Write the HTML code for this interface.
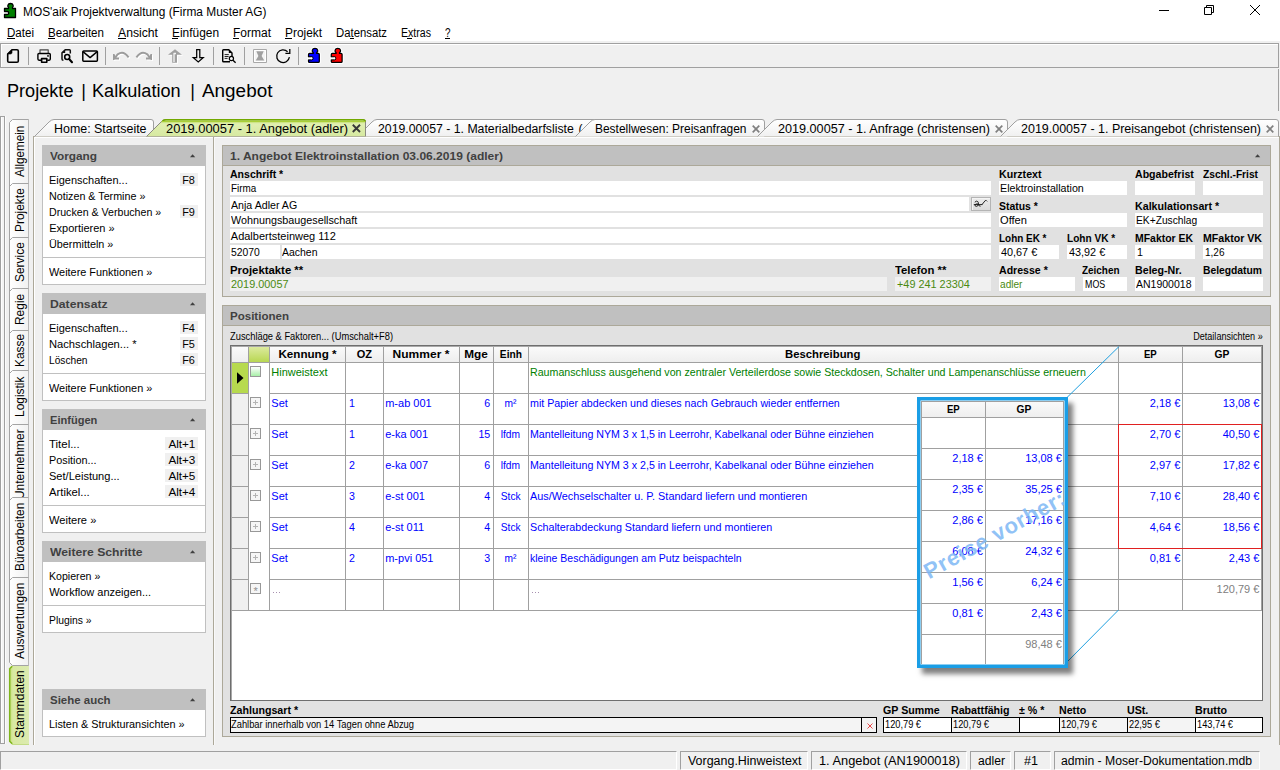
<!DOCTYPE html>
<html><head><meta charset="utf-8"><title>MOS'aik Projektverwaltung</title>
<style>
html,body{margin:0;padding:0}
body{width:1280px;height:770px;overflow:hidden;background:#f0f0f0;position:relative;font-family:"Liberation Sans",sans-serif;}
div{position:absolute;box-sizing:border-box}
svg{position:absolute;overflow:visible}
.t{position:absolute;white-space:pre;font-family:"Liberation Sans",sans-serif;color:#000}
</style></head><body>
<div style="left:0px;top:0px;width:1280px;height:41px;background:#fff;"></div>
<svg style="left:3px;top:2px" width="15" height="17" viewBox="0 0 15 17">
<path d="M1.5 6.5H5.5V5.2C4.4 4.6 4.4 1.5 7.5 1.5S10.6 4.6 9.5 5.2V6.5H12.5V15.5H1.5V12.5H4.2C6.2 12.5 6.2 9.5 4.2 9.5H1.5Z" fill="#008000" stroke="#000" stroke-width="1.3" stroke-linejoin="round"/></svg>
<span class="t" style="left:22.80px;top:6px;font-size:12px;line-height:12px;transform-origin:0 0;transform:scaleX(0.9907);">MOS&#x27;aik Projektverwaltung (Firma Muster AG)</span>
<svg style="left:1150px;top:0" width="130" height="22" viewBox="0 0 130 22" fill="none" stroke="#000" stroke-width="1">
<path d="M9 10.5H19"/><path d="M54.5 7.5H61.500V14.500H54.500Z"/><path d="M56.500 7.500V5.500H63.500V12.500H61.500"/>
<path d="M100 5L110 15M110 5L100 15" stroke-width="1"/></svg>
<span class="t" style="left:7.00px;top:27px;font-size:12px;line-height:12px;transform-origin:0 0;transform:scaleX(0.9637);">Datei</span>
<div style="left:7px;top:38px;width:8px;height:1px;background:#000;"></div>
<span class="t" style="left:48.00px;top:27px;font-size:12px;line-height:12px;transform-origin:0 0;transform:scaleX(0.9647);">Bearbeiten</span>
<div style="left:48px;top:38px;width:7px;height:1px;background:#000;"></div>
<span class="t" style="left:118.00px;top:27px;font-size:12px;line-height:12px;transform-origin:0 0;transform:scaleX(1.0163);">Ansicht</span>
<div style="left:118px;top:38px;width:8px;height:1px;background:#000;"></div>
<span class="t" style="left:172.00px;top:27px;font-size:12px;line-height:12px;transform-origin:0 0;transform:scaleX(0.9921);">Einfügen</span>
<div style="left:172px;top:38px;width:6px;height:1px;background:#000;"></div>
<span class="t" style="left:233.00px;top:27px;font-size:12px;line-height:12px;">Format</span>
<div style="left:233px;top:38px;width:6px;height:1px;background:#000;"></div>
<span class="t" style="left:285.00px;top:27px;font-size:12px;line-height:12px;transform-origin:0 0;transform:scaleX(0.9904);">Projekt</span>
<div style="left:285px;top:38px;width:7px;height:1px;background:#000;"></div>
<span class="t" style="left:336.00px;top:27px;font-size:12px;line-height:12px;transform-origin:0 0;transform:scaleX(0.9439);">Datensatz</span>
<div style="left:350px;top:38px;width:4px;height:1px;background:#000;"></div>
<span class="t" style="left:401.00px;top:27px;font-size:12px;line-height:12px;transform-origin:0 0;transform:scaleX(0.8819);">Extras</span>
<div style="left:407px;top:38px;width:5px;height:1px;background:#000;"></div>
<span class="t" style="left:445.00px;top:27px;font-size:12px;line-height:12px;transform-origin:0 0;transform:scaleX(0.8224);">?</span>
<div style="left:445px;top:38px;width:5px;height:1px;background:#000;"></div>
<div style="left:0px;top:43px;width:1279px;height:25px;border:1px solid #a0a0a0;"></div>
<div style="left:1px;top:44px;width:1277px;height:1px;background:#fff;"></div>
<div style="left:1px;top:44px;width:1px;height:23px;background:#fff;"></div>
<div style="left:28px;top:47px;width:1px;height:18px;background:#a0a0a0;"></div>
<div style="left:105px;top:47px;width:1px;height:18px;background:#a0a0a0;"></div>
<div style="left:159px;top:47px;width:1px;height:18px;background:#a0a0a0;"></div>
<div style="left:213px;top:47px;width:1px;height:18px;background:#a0a0a0;"></div>
<div style="left:244px;top:47px;width:1px;height:18px;background:#a0a0a0;"></div>
<div style="left:298px;top:47px;width:1px;height:18px;background:#a0a0a0;"></div>
<svg style="left:0;top:0" width="360" height="70" viewBox="0 0 360 70" fill="none" stroke-linejoin="round" stroke-linecap="butt">
<!-- new doc -->
<path d="M12 49.7H17Q18.3 49.7 18.3 51V61Q18.3 62.3 17 62.3H9Q7.7 62.3 7.7 61V54Z" stroke="#000" stroke-width="1.6"/>
<path d="M7.7 54L12 49.7V52.6Q12 54 10.6 54Z" fill="#000" stroke="#000" stroke-width="0.6"/>
<!-- printer -->
<path d="M40 53.2V49.800H48.200V53.200" stroke="#444" stroke-width="1.150"/>
<path d="M41 60.2H39Q37.9 60.2 37.9 59.1V54.6Q37.9 53.5 39 53.5H49.2Q50.3 53.5 50.3 54.6V59.1Q50.3 60.2 49.2 60.2H47.2" stroke="#000" stroke-width="1.4"/>
<path d="M41.6 58.6H46.8V62.2H41.6Z" stroke="#000" stroke-width="1.6"/>
<circle cx="48" cy="55.9" r="0.9" fill="#000"/>
<!-- preview (doc + magnifier) -->
<path d="M70.3 53.6V50.6Q70.3 49.7 69.4 49.7H65.2L62 52.9V59Q62 60.2 63.4 60.3" stroke="#111" stroke-width="1.5"/>
<path d="M62 52.9L65.2 49.7V52.9Z" fill="#111"/>
<circle cx="67.2" cy="57" r="2.5" stroke="#000" stroke-width="1.6"/>
<path d="M69.1 59L72 62.2" stroke="#000" stroke-width="2.1" stroke-linecap="round"/>
<!-- envelope -->
<path d="M83.7 50.9H96.5Q97.4 50.9 97.4 51.8V60.3Q97.4 61.2 96.5 61.2H83.7Q82.8 61.2 82.8 60.3V51.8Q82.8 50.9 83.7 50.9Z" stroke="#000" stroke-width="1.5"/>
<path d="M83 51.6L90.1 57.6L97.2 51.6" stroke="#000" stroke-width="1.4"/>
<!-- undo -->
<g transform="translate(1,1)"><path d="M115.600 57.200L117.600 54.300Q120 52.800 122 52.800Q125 52.800 128.600 57.300" stroke="#fff" stroke-width="2"/>
<path d="M113 54H114.400L116.400 57.600H119V59.400H114.400V60H113Z" fill="#fff"/></g>
<path d="M115.600 57.200L117.600 54.300Q120 52.800 122 52.800Q125 52.800 128.600 57.300" stroke="#9c9c9c" stroke-width="2"/>
<path d="M113 54H114.400L116.400 57.600H119V59.400H114.400V60H113Z" fill="#9c9c9c"/>
<!-- redo -->
<g transform="translate(1,1)"><path d="M149.400 57.200L147.400 54.300Q145 52.800 143 52.800Q140 52.800 136.400 57.300" stroke="#fff" stroke-width="2"/>
<path d="M152 54H150.600L148.600 57.600H146V59.400H150.600V60H152Z" fill="#fff"/></g>
<path d="M149.400 57.200L147.400 54.300Q145 52.800 143 52.800Q140 52.800 136.400 57.300" stroke="#9c9c9c" stroke-width="2"/>
<path d="M152 54H150.600L148.600 57.600H146V59.400H150.600V60H152Z" fill="#9c9c9c"/>
<!-- up arrow (disabled) -->
<path d="M175 49.2L182 54.8H177V62.7H172.200V54.8H168Z" fill="#fff" transform="translate(1,1)"/>
<path d="M175 49.200L182 54.800H177V62.700H172.200V54.800H168Z" fill="#a0a0a0"/>
<path d="M174 62V53.500H176" stroke="#f4f4f4" stroke-width="1.300"/>
<!-- down arrow -->
<path d="M196.700 49.700H199.800V57.700H203.200L198.250 62L193.300 57.700H196.700Z" stroke="#000" stroke-width="1.250" stroke-linejoin="miter"/>
<!-- doc search -->
<path d="M232 57V53L228.800 49.700H223.500Q222.700 49.700 222.700 50.500V61Q222.700 61.800 223.500 61.800H230" stroke="#000" stroke-width="1.400"/>
<path d="M228.800 49.700V53H232Z" fill="#000"/>
<path d="M224.600 54.600H228.800M224.600 56.500H228.600M224.600 58.400H227.600" stroke="#222" stroke-width="1"/>
<circle cx="231.400" cy="58.500" r="2.100" stroke="#000" stroke-width="1.200" fill="#f6f6f6"/>
<path d="M233 60.200L235.600 62.700" stroke="#000" stroke-width="1.300"/>
<!-- disabled X -->
<rect x="253.500" y="49.500" width="13" height="13" stroke="#a8a8a8" stroke-width="1" fill="#f4f4f4"/>
<rect x="254.500" y="50.500" width="11" height="11" stroke="#fff" stroke-width="1"/>
<path d="M256.300 51.300H263.700L261.600 56L264.300 60.600H255.700L258.400 56Z" fill="#a0a0a0"/>
<!-- refresh -->
<path d="M289.400 57.200A6.400 6.400 0 1 1 287.600 51.700" stroke="#000" stroke-width="1.300"/>
<path d="M289.800 49V53.400H285.400" stroke="#000" stroke-width="1.300" stroke-linejoin="miter"/>
<!-- puzzles -->
<path transform="translate(0,0)" d="M308.5 56.9V54.4Q308.5 53.4 309.5 53.4H313.300V52.600C311.500 51.600 311.900 48.400 315 48.400S318.500 51.600 316.700 52.600V53.400H318.300Q319.300 53.400 319.300 54.400V61.400Q319.300 62.400 318.300 62.400H309.500Q308.500 62.400 308.500 61.400V59.800H311.500A1.450 1.450 0 0 0 311.500 56.900Z" stroke="#fff" stroke-width="3.2" fill="#fff"/>
<path transform="translate(0,0)" d="M308.5 56.9V54.4Q308.5 53.4 309.5 53.4H313.300V52.600C311.500 51.600 311.900 48.400 315 48.400S318.500 51.600 316.700 52.600V53.400H318.300Q319.300 53.400 319.300 54.400V61.400Q319.300 62.400 318.300 62.400H309.500Q308.500 62.400 308.500 61.400V59.800H311.500A1.450 1.450 0 0 0 311.500 56.900Z" stroke="#000" stroke-width="1.250" fill="#0000ff"/>
<circle cx="311.55" cy="58.35" r="1.05" fill="#fff"/><rect x="307.2" y="57.550" width="3.500" height="1.600" fill="#fafafa"/>
<path transform="translate(22.8,0)" d="M308.5 56.9V54.4Q308.5 53.4 309.5 53.4H313.300V52.600C311.500 51.600 311.900 48.400 315 48.400S318.500 51.600 316.700 52.600V53.400H318.300Q319.300 53.400 319.300 54.400V61.400Q319.300 62.400 318.300 62.400H309.500Q308.500 62.400 308.500 61.400V59.800H311.500A1.450 1.450 0 0 0 311.500 56.900Z" stroke="#fff" stroke-width="3.2" fill="#fff"/>
<path transform="translate(22.8,0)" d="M308.5 56.9V54.4Q308.5 53.4 309.5 53.4H313.300V52.600C311.500 51.600 311.900 48.400 315 48.400S318.500 51.600 316.700 52.600V53.400H318.300Q319.300 53.400 319.300 54.400V61.400Q319.300 62.400 318.300 62.400H309.500Q308.500 62.400 308.500 61.400V59.800H311.500A1.450 1.450 0 0 0 311.500 56.900Z" stroke="#000" stroke-width="1.250" fill="#ff0000"/>
<circle cx="334.35" cy="58.35" r="1.05" fill="#fff"/><rect x="330.0" y="57.550" width="3.500" height="1.600" fill="#fafafa"/>
</svg>

<span class="t" style="left:6.60px;top:82px;font-size:18px;line-height:18px;transform-origin:0 0;transform:scaleX(1.0069);">Projekte</span>
<span class="t" style="left:81.30px;top:82px;font-size:18px;line-height:18px;">|</span>
<span class="t" style="left:92.40px;top:82px;font-size:18px;line-height:18px;transform-origin:0 0;transform:scaleX(1.0061);">Kalkulation</span>
<span class="t" style="left:190.30px;top:82px;font-size:18px;line-height:18px;">|</span>
<span class="t" style="left:202.00px;top:82px;font-size:18px;line-height:18px;transform-origin:0 0;transform:scaleX(1.0498);">Angebot</span>
<div style="left:1278px;top:69px;width:1px;height:42px;background:#a0a0a0;"></div>
<div style="left:0px;top:116px;width:1px;height:628px;background:#a0a0a0;"></div>
<div style="left:1px;top:117px;width:1px;height:627px;background:#ffffff;"></div>
<div style="left:2px;top:117px;width:2px;height:627px;background:#f4f4f4;"></div>
<div style="left:4px;top:116px;width:1px;height:628px;background:#a0a0a0;"></div>
<div style="left:5px;top:116px;width:1px;height:628px;background:#fcfcfc;"></div>
<div style="left:0px;top:116px;width:5px;height:1px;background:#a0a0a0;"></div>
<div style="left:0px;top:743px;width:5px;height:1px;background:#a0a0a0;"></div>
<div style="left:33px;top:136px;width:1247px;height:609px;border:1px solid #aca899;border-bottom:none;"></div>
<div style="left:34px;top:137px;width:1245px;height:608px;border:1px solid #fff;border-right:none;border-bottom:none;"></div>
<div style="left:213px;top:137px;width:1px;height:608px;background:#aca899;"></div>
<div style="left:214px;top:137px;width:1px;height:608px;background:#f9f9f9;"></div>
<svg width="0" height="0"><defs>
<linearGradient id="gt" x1="0" y1="0" x2="0" y2="1"><stop offset="0" stop-color="#ffffff"/><stop offset="1" stop-color="#f0f0f0"/></linearGradient>
<linearGradient id="ga" x1="0" y1="0" x2="0" y2="1"><stop offset="0" stop-color="#d4e790"/><stop offset="0.3" stop-color="#e0efb0"/><stop offset="1" stop-color="#d6e8a0"/></linearGradient>
</defs></svg>
<svg style="left:34px;top:119px;z-index:2" width="120" height="18" viewBox="0 0 120 18"><path d="M0.5 17.5L15 3Q17.5 0.5 20 0.5H117Q119.5 0.5 119.5 3V17.5Z" fill="url(#gt)" stroke="none"/><path d="M0.5 17.5L15 3Q17.5 0.5 20 0.5H117Q119.5 0.5 119.5 3V17.5" fill="none" stroke="#a0a0a0" stroke-width="1"/></svg>
<svg style="left:357px;top:119px;z-index:1" width="244" height="18" viewBox="0 0 244 18"><path d="M0.5 17.5L15 3Q17.5 0.5 20 0.5H241Q243.5 0.5 243.5 3V17.5Z" fill="url(#gt)" stroke="none"/><path d="M0.5 17.5L15 3Q17.5 0.5 20 0.5H241Q243.5 0.5 243.5 3V17.5" fill="none" stroke="#a0a0a0" stroke-width="1"/></svg>
<svg style="left:575px;top:119px;z-index:2" width="190" height="18" viewBox="0 0 190 18"><path d="M0.5 17.5L15 3Q17.5 0.5 20 0.5H187Q189.5 0.5 189.5 3V17.5Z" fill="url(#gt)" stroke="none"/><path d="M0.5 17.5L15 3Q17.5 0.5 20 0.5H187Q189.5 0.5 189.5 3V17.5" fill="none" stroke="#a0a0a0" stroke-width="1"/></svg>
<svg style="left:757px;top:119px;z-index:3" width="251" height="18" viewBox="0 0 251 18"><path d="M0.5 17.5L15 3Q17.5 0.5 20 0.5H248Q250.5 0.5 250.5 3V17.5Z" fill="url(#gt)" stroke="none"/><path d="M0.5 17.5L15 3Q17.5 0.5 20 0.5H248Q250.5 0.5 250.5 3V17.5" fill="none" stroke="#a0a0a0" stroke-width="1"/></svg>
<svg style="left:1000px;top:119px;z-index:4" width="279" height="18" viewBox="0 0 279 18"><path d="M0.5 17.5L15 3Q17.5 0.5 20 0.5H276Q278.5 0.5 278.5 3V17.5Z" fill="url(#gt)" stroke="none"/><path d="M0.5 17.5L15 3Q17.5 0.5 20 0.5H276Q278.5 0.5 278.5 3V17.5" fill="none" stroke="#a0a0a0" stroke-width="1"/></svg>
<svg style="left:146px;top:119px;z-index:5" width="220" height="18" viewBox="0 0 220 18"><path d="M0.5 17.5L15 3Q17.5 0.5 20 0.5H217Q219.5 0.5 219.5 3V17.5Z" fill="url(#ga)" stroke="none"/><path d="M0.5 17.5L15 3Q17.5 0.5 20 0.5H217Q219.5 0.5 219.5 3V17.5" fill="none" stroke="#8a8a80" stroke-width="1"/><path d="M16.500 1.800Q18 0.700 20 0.700H217Q219.2 0.700 219.3 2.600" fill="none" stroke="#72a800" stroke-width="1.500"/><path d="M15.500 2.600H219" fill="none" stroke="#a9cf38" stroke-width="1.400"/><path d="M1 17.500H220" fill="none" stroke="#b2b29c" stroke-width="1"/></svg>
<span class="t" style="left:54.00px;top:123px;font-size:12px;line-height:12px;transform-origin:0 0;transform:scaleX(1.0350);z-index:6;">Home: Startseite</span>
<span class="t" style="left:166.00px;top:123px;font-size:12px;line-height:12px;transform-origin:0 0;transform:scaleX(1.0739);z-index:6;">2019.00057 - 1. Angebot (adler)</span>
<svg style="left:352.2px;top:124.2px;z-index:6" width="8.8" height="8.8" viewBox="0 0 8 8"><path d="M0.7 0.7L7.3 7.3M7.3 0.7L0.7 7.3" stroke="#383838" stroke-width="1.7" fill="none"/></svg>
<span class="t" style="left:378.00px;top:123px;font-size:12px;line-height:12px;transform-origin:0 0;transform:scaleX(1.0227);z-index:1;">2019.00057 - 1. Materialbedarfsliste</span>
<span class="t" style="left:578.60px;top:123px;font-size:12px;line-height:12px;z-index:1;">(</span>
<span class="t" style="left:595.00px;top:123px;font-size:12px;line-height:12px;transform-origin:0 0;transform:scaleX(0.9961);z-index:6;">Bestellwesen: Preisanfragen</span>
<svg style="left:751.5px;top:124.5px;z-index:6" width="8" height="8" viewBox="0 0 8 8"><path d="M0.7 0.7L7.3 7.3M7.3 0.7L0.7 7.3" stroke="#808080" stroke-width="1.7" fill="none"/></svg>
<span class="t" style="left:777.50px;top:123px;font-size:12px;line-height:12px;transform-origin:0 0;transform:scaleX(1.0523);z-index:6;">2019.00057 - 1. Anfrage (christensen)</span>
<svg style="left:994.5px;top:124.5px;z-index:6" width="8" height="8" viewBox="0 0 8 8"><path d="M0.7 0.7L7.3 7.3M7.3 0.7L0.7 7.3" stroke="#808080" stroke-width="1.7" fill="none"/></svg>
<span class="t" style="left:1020.50px;top:123px;font-size:12px;line-height:12px;transform-origin:0 0;transform:scaleX(1.0398);z-index:6;">2019.00057 - 1. Preisangebot (christensen)</span>
<svg style="left:1265.5px;top:124.5px;z-index:6" width="8" height="8" viewBox="0 0 8 8"><path d="M0.7 0.7L7.3 7.3M7.3 0.7L0.7 7.3" stroke="#808080" stroke-width="1.7" fill="none"/></svg>
<svg style="left:0;top:0" width="40" height="770" viewBox="0 0 40 770"><defs><linearGradient id="gv" x1="0" y1="0" x2="1" y2="0"><stop offset="0" stop-color="#ffffff"/><stop offset="1" stop-color="#f1f1f1"/></linearGradient><linearGradient id="gva" x1="0" y1="0" x2="1" y2="0"><stop offset="0" stop-color="#c2dc70"/><stop offset="0.2" stop-color="#d8e9a2"/><stop offset="1" stop-color="#dcebb0"/></linearGradient></defs><path d="M9.500 122.500L12.500 119.500H28.500V665.500H12.500L9.500 662.500Z" fill="url(#gv)" stroke="none"/><path d="M9 668.500L12 665.500H29V744.500H12L9 741.500Z" fill="url(#gva)" stroke="none"/><path d="M9.700 668.700L12.200 666.200M9.700 668.500V741.300L12.200 743.800" fill="none" stroke="#7fb51c" stroke-width="1.500"/><path d="M12 744.500H29" stroke="#c4dc88" stroke-width="1" fill="none"/><path d="M12.500 119.500L9.500 122.500V662.500L12.500 665.500H28.500V119.500Z" fill="none" stroke="#a4a4a4" stroke-width="1"/><path d="M28.500 120V665" stroke="#b8b8b8" stroke-width="1" fill="none"/><path d="M9.500 186.5L12.500 183.5H28.500" fill="none" stroke="#a4a4a4" stroke-width="1"/><path d="M9.500 240.5L12.500 237.5H28.500" fill="none" stroke="#a4a4a4" stroke-width="1"/><path d="M9.500 291.5L12.500 288.5H28.500" fill="none" stroke="#a4a4a4" stroke-width="1"/><path d="M9.500 333.5L12.500 330.5H28.500" fill="none" stroke="#a4a4a4" stroke-width="1"/><path d="M9.500 373.5L12.500 370.5H28.500" fill="none" stroke="#a4a4a4" stroke-width="1"/><path d="M9.500 427.5L12.500 424.5H28.500" fill="none" stroke="#a4a4a4" stroke-width="1"/><path d="M9.500 500.5L12.500 497.5H28.500" fill="none" stroke="#a4a4a4" stroke-width="1"/><path d="M9.500 580.5L12.500 577.5H28.500" fill="none" stroke="#a4a4a4" stroke-width="1"/></svg>
<span class="t" style="left:24px;top:176.69px;font-size:12px;line-height:12px;font-weight:normal;color:#000;transform-origin:0 0;transform:rotate(-90deg) translate(0,-10px) scaleX(0.9750);">Allgemein</span>
<span class="t" style="left:24px;top:231.91px;font-size:12px;line-height:12px;font-weight:normal;color:#000;transform-origin:0 0;transform:rotate(-90deg) translate(0,-10px) scaleX(0.9950);">Projekte</span>
<span class="t" style="left:24px;top:282.41px;font-size:12px;line-height:12px;font-weight:normal;color:#000;transform-origin:0 0;transform:rotate(-90deg) translate(0,-10px) scaleX(0.9950);">Service</span>
<span class="t" style="left:24px;top:324.60px;font-size:12px;line-height:12px;font-weight:normal;color:#000;transform-origin:0 0;transform:rotate(-90deg) translate(0,-10px) scaleX(0.9950);">Regie</span>
<span class="t" style="left:24px;top:366.60px;font-size:12px;line-height:12px;font-weight:normal;color:#000;transform-origin:0 0;transform:rotate(-90deg) translate(0,-10px) scaleX(0.9950);">Kasse</span>
<span class="t" style="left:24px;top:417.24px;font-size:12px;line-height:12px;font-weight:normal;color:#000;transform-origin:0 0;transform:rotate(-90deg) translate(0,-10px) scaleX(0.9950);">Logistik</span>
<div style="left:9px;top:425px;width:20px;height:72px;overflow:hidden">
<span class="t" style="left:15px;top:74.44px;font-size:12px;line-height:12px;font-weight:normal;color:#000;transform-origin:0 0;transform:rotate(-90deg) translate(0,-10px) scaleX(0.9950);">Unternehmer</span>
</div>
<span class="t" style="left:24px;top:571.19px;font-size:12px;line-height:12px;font-weight:normal;color:#000;transform-origin:0 0;transform:rotate(-90deg) translate(0,-10px) scaleX(0.9950);">Büroarbeiten</span>
<span class="t" style="left:24px;top:659.17px;font-size:12px;line-height:12px;font-weight:normal;color:#000;transform-origin:0 0;transform:rotate(-90deg) translate(0,-10px) scaleX(0.9950);">Auswertungen</span>
<span class="t" style="left:24px;top:738.35px;font-size:12px;line-height:12px;font-weight:normal;color:#000;transform-origin:0 0;transform:rotate(-90deg) translate(0,-10px) scaleX(0.9950);">Stammdaten</span>
<div style="left:42px;top:145px;width:164px;height:140px;background:#fff;border:1px solid #c0c0c0;"></div>
<div style="left:42px;top:145px;width:164px;height:21px;background:#c0c0c0;"></div>
<span class="t" style="left:49.60px;top:151px;font-size:11px;line-height:11px;font-weight:bold;color:#404040;transform-origin:0 0;transform:scaleX(1.0731);">Vorgang</span>
<svg style="left:190px;top:154px" width="6" height="4" viewBox="0 0 6 4"><path d="M0 3.3L2.6 0.2L5.2 3.3Z" fill="#404040"/></svg>
<span class="t" style="left:49.20px;top:175px;font-size:11px;line-height:11px;transform-origin:0 0;transform:scaleX(0.9976);">Eigenschaften...</span>
<div style="left:180px;top:173px;width:18px;height:13px;background:#f0f0f0;"></div>
<span class="t" style="left:182.36px;top:175px;font-size:11px;line-height:11px;transform-origin:100% 0;transform:scaleX(0.9888);">F8</span>
<span class="t" style="left:49.20px;top:191px;font-size:11px;line-height:11px;transform-origin:0 0;transform:scaleX(0.9751);">Notizen &amp; Termine »</span>
<span class="t" style="left:49.20px;top:207px;font-size:11px;line-height:11px;transform-origin:0 0;transform:scaleX(0.9657);">Drucken &amp; Verbuchen »</span>
<div style="left:180px;top:205px;width:18px;height:13px;background:#f0f0f0;"></div>
<span class="t" style="left:182.36px;top:207px;font-size:11px;line-height:11px;transform-origin:100% 0;transform:scaleX(0.9888);">F9</span>
<span class="t" style="left:49.20px;top:223px;font-size:11px;line-height:11px;">Exportieren »</span>
<span class="t" style="left:49.20px;top:239px;font-size:11px;line-height:11px;transform-origin:0 0;transform:scaleX(0.9844);">Übermitteln »</span>
<div style="left:43px;top:257px;width:162px;height:1px;background:#c0c0c0;"></div>
<span class="t" style="left:49.20px;top:267px;font-size:11px;line-height:11px;transform-origin:0 0;transform:scaleX(0.9898);">Weitere Funktionen »</span>
<div style="left:42px;top:293px;width:164px;height:108px;background:#fff;border:1px solid #c0c0c0;"></div>
<div style="left:42px;top:293px;width:164px;height:21px;background:#c0c0c0;"></div>
<span class="t" style="left:49.60px;top:299px;font-size:11px;line-height:11px;font-weight:bold;color:#404040;transform-origin:0 0;transform:scaleX(1.1084);">Datensatz</span>
<svg style="left:190px;top:302px" width="6" height="4" viewBox="0 0 6 4"><path d="M0 3.3L2.6 0.2L5.2 3.3Z" fill="#404040"/></svg>
<span class="t" style="left:49.20px;top:323px;font-size:11px;line-height:11px;transform-origin:0 0;transform:scaleX(0.9976);">Eigenschaften...</span>
<div style="left:180px;top:321px;width:18px;height:13px;background:#f0f0f0;"></div>
<span class="t" style="left:182.36px;top:323px;font-size:11px;line-height:11px;transform-origin:100% 0;transform:scaleX(0.9888);">F4</span>
<span class="t" style="left:49.20px;top:339px;font-size:11px;line-height:11px;transform-origin:0 0;transform:scaleX(1.0160);">Nachschlagen... *</span>
<div style="left:180px;top:337px;width:18px;height:13px;background:#f0f0f0;"></div>
<span class="t" style="left:182.36px;top:339px;font-size:11px;line-height:11px;transform-origin:100% 0;transform:scaleX(0.9888);">F5</span>
<span class="t" style="left:49.20px;top:355px;font-size:11px;line-height:11px;transform-origin:0 0;transform:scaleX(0.9256);">Löschen</span>
<div style="left:180px;top:353px;width:18px;height:13px;background:#f0f0f0;"></div>
<span class="t" style="left:182.36px;top:355px;font-size:11px;line-height:11px;transform-origin:100% 0;transform:scaleX(0.9888);">F6</span>
<div style="left:43px;top:373px;width:162px;height:1px;background:#c0c0c0;"></div>
<span class="t" style="left:49.20px;top:383px;font-size:11px;line-height:11px;transform-origin:0 0;transform:scaleX(0.9898);">Weitere Funktionen »</span>
<div style="left:42px;top:409px;width:164px;height:124px;background:#fff;border:1px solid #c0c0c0;"></div>
<div style="left:42px;top:409px;width:164px;height:21px;background:#c0c0c0;"></div>
<span class="t" style="left:49.60px;top:415px;font-size:11px;line-height:11px;font-weight:bold;color:#404040;transform-origin:0 0;transform:scaleX(1.0072);">Einfügen</span>
<svg style="left:190px;top:418px" width="6" height="4" viewBox="0 0 6 4"><path d="M0 3.3L2.6 0.2L5.2 3.3Z" fill="#404040"/></svg>
<span class="t" style="left:49.20px;top:439px;font-size:11px;line-height:11px;transform-origin:0 0;transform:scaleX(1.0390);">Titel...</span>
<div style="left:165px;top:437px;width:33px;height:13px;background:#f0f0f0;"></div>
<span class="t" style="left:169.81px;top:439px;font-size:11px;line-height:11px;transform-origin:100% 0;transform:scaleX(1.0634);">Alt+1</span>
<span class="t" style="left:49.20px;top:455px;font-size:11px;line-height:11px;transform-origin:0 0;transform:scaleX(0.9853);">Position...</span>
<div style="left:165px;top:453px;width:33px;height:13px;background:#f0f0f0;"></div>
<span class="t" style="left:169.81px;top:455px;font-size:11px;line-height:11px;transform-origin:100% 0;transform:scaleX(1.0634);">Alt+3</span>
<span class="t" style="left:49.20px;top:471px;font-size:11px;line-height:11px;transform-origin:0 0;transform:scaleX(1.0039);">Set/Leistung...</span>
<div style="left:165px;top:469px;width:33px;height:13px;background:#f0f0f0;"></div>
<span class="t" style="left:169.81px;top:471px;font-size:11px;line-height:11px;transform-origin:100% 0;transform:scaleX(1.0634);">Alt+5</span>
<span class="t" style="left:49.20px;top:487px;font-size:11px;line-height:11px;transform-origin:0 0;transform:scaleX(1.0243);">Artikel...</span>
<div style="left:165px;top:485px;width:33px;height:13px;background:#f0f0f0;"></div>
<span class="t" style="left:169.81px;top:487px;font-size:11px;line-height:11px;transform-origin:100% 0;transform:scaleX(1.0634);">Alt+4</span>
<div style="left:43px;top:505px;width:162px;height:1px;background:#c0c0c0;"></div>
<span class="t" style="left:49.20px;top:515px;font-size:11px;line-height:11px;transform-origin:0 0;transform:scaleX(1.0091);">Weitere »</span>
<div style="left:42px;top:541px;width:164px;height:92px;background:#fff;border:1px solid #c0c0c0;"></div>
<div style="left:42px;top:541px;width:164px;height:21px;background:#c0c0c0;"></div>
<span class="t" style="left:49.60px;top:547px;font-size:11px;line-height:11px;font-weight:bold;color:#404040;transform-origin:0 0;transform:scaleX(1.1070);">Weitere Schritte</span>
<svg style="left:190px;top:550px" width="6" height="4" viewBox="0 0 6 4"><path d="M0 3.3L2.6 0.2L5.2 3.3Z" fill="#404040"/></svg>
<span class="t" style="left:49.20px;top:571px;font-size:11px;line-height:11px;transform-origin:0 0;transform:scaleX(0.9639);">Kopieren »</span>
<span class="t" style="left:49.20px;top:587px;font-size:11px;line-height:11px;">Workflow anzeigen...</span>
<div style="left:43px;top:605px;width:162px;height:1px;background:#c0c0c0;"></div>
<span class="t" style="left:49.20px;top:615px;font-size:11px;line-height:11px;transform-origin:0 0;transform:scaleX(0.9411);">Plugins »</span>
<div style="left:42px;top:689px;width:164px;height:48px;background:#fff;border:1px solid #c0c0c0;"></div>
<div style="left:42px;top:689px;width:164px;height:21px;background:#c0c0c0;"></div>
<span class="t" style="left:49.60px;top:695px;font-size:11px;line-height:11px;font-weight:bold;color:#404040;transform-origin:0 0;transform:scaleX(1.0417);">Siehe auch</span>
<svg style="left:190px;top:698px" width="6" height="4" viewBox="0 0 6 4"><path d="M0 3.3L2.6 0.2L5.2 3.3Z" fill="#404040"/></svg>
<span class="t" style="left:49.20px;top:719px;font-size:11px;line-height:11px;transform-origin:0 0;transform:scaleX(0.9849);">Listen &amp; Strukturansichten »</span>
<div style="left:222px;top:145px;width:1049px;height:152px;background:#e1e1e1;border:1px solid #aca899;"></div>
<div style="left:223px;top:146px;width:1047px;height:19px;background:#c0c0c0;"></div>
<div style="left:223px;top:165px;width:1047px;height:1px;background:#aca899;"></div>
<span class="t" style="left:230.40px;top:151px;font-size:11px;line-height:11px;font-weight:bold;color:#404040;transform-origin:0 0;transform:scaleX(1.0936);">1. Angebot Elektroinstallation 03.06.2019 (adler)</span>
<svg style="left:1255px;top:154px" width="6" height="4" viewBox="0 0 6 4"><path d="M0 3.3L2.6 0.2L5.2 3.3Z" fill="#404040"/></svg>
<span class="t" style="left:229.90px;top:170px;font-size:10px;line-height:10px;font-weight:bold;transform-origin:0 0;transform:scaleX(1.0522);">Anschrift *</span>
<div style="left:230px;top:181px;width:761px;height:14px;background:#fff;"></div>
<span class="t" style="left:230.80px;top:183px;font-size:11px;line-height:11px;transform-origin:0 0;transform:scaleX(0.8965);">Firma</span>
<div style="left:230px;top:197px;width:739px;height:14px;background:#fff;"></div>
<span class="t" style="left:230.80px;top:200px;font-size:11px;line-height:11px;transform-origin:0 0;transform:scaleX(0.9664);">Anja Adler AG</span>
<div style="left:230px;top:213px;width:761px;height:14px;background:#fff;"></div>
<span class="t" style="left:230.80px;top:215px;font-size:11px;line-height:11px;transform-origin:0 0;transform:scaleX(0.9799);">Wohnungsbaugesellschaft</span>
<div style="left:230px;top:229px;width:761px;height:14px;background:#fff;"></div>
<span class="t" style="left:230.80px;top:231px;font-size:11px;line-height:11px;">Adalbertsteinweg 112</span>
<div style="left:230px;top:245px;width:49.5px;height:14px;background:#fff;"></div>
<span class="t" style="left:231.20px;top:247px;font-size:11px;line-height:11px;transform-origin:0 0;transform:scaleX(0.9414);">52070</span>
<div style="left:281.5px;top:245px;width:709.5px;height:14px;background:#fff;"></div>
<span class="t" style="left:282.30px;top:247px;font-size:11px;line-height:11px;transform-origin:0 0;transform:scaleX(0.9514);">Aachen</span>
<span class="t" style="left:229.90px;top:266px;font-size:10px;line-height:10px;font-weight:bold;transform-origin:0 0;transform:scaleX(1.1352);">Projektakte **</span>
<div style="left:230px;top:277px;width:657px;height:14px;background:#f0f0f0;"></div>
<span class="t" style="left:231.20px;top:279px;font-size:11px;line-height:11px;color:#4b8a10;transform-origin:0 0;transform:scaleX(0.9892);">2019.00057</span>
<span class="t" style="left:895.10px;top:266px;font-size:10px;line-height:10px;font-weight:bold;transform-origin:0 0;transform:scaleX(1.1324);">Telefon **</span>
<div style="left:895px;top:277px;width:96px;height:14px;background:#f0f0f0;"></div>
<span class="t" style="left:897.00px;top:279px;font-size:11px;line-height:11px;color:#4b8a10;transform-origin:0 0;transform:scaleX(0.9875);">+49 241 23304</span>
<div style="left:971px;top:197px;width:20px;height:14px;background:linear-gradient(#ececec,#dadada);border:1px solid #b4b4b4;"></div>
<div style="left:972px;top:198px;width:18px;height:12px;border:1px solid #f4f4f4;border-right:none;border-bottom:none;"></div>
<svg style="left:973px;top:199px" width="16" height="10" viewBox="0 0 16 10"><path d="M1.800 3.200Q3.400 1.400 4.800 2.600Q5.600 3.400 5.400 5.400Q5 7.400 3.400 7.400Q1.600 7.200 2 5.800Q2.600 4.600 5.400 5M5.400 5.200Q6 7.600 7.600 7.200M0.800 5.600H9.400M8.800 5.800L12.200 1.600Q13.400 1 14.200 2.400" fill="none" stroke="#1a1a1a" stroke-width="0.950"/></svg>
<span class="t" style="left:998.70px;top:170px;font-size:10px;line-height:10px;font-weight:bold;transform-origin:0 0;transform:scaleX(1.0621);">Kurztext</span>
<div style="left:999px;top:181px;width:128px;height:14px;background:#fff;"></div>
<span class="t" style="left:999.80px;top:183px;font-size:11px;line-height:11px;transform-origin:0 0;transform:scaleX(0.9719);">Elektroinstallation</span>
<span class="t" style="left:1135.10px;top:170px;font-size:10px;line-height:10px;font-weight:bold;transform-origin:0 0;transform:scaleX(1.0583);">Abgabefrist</span>
<div style="left:1135px;top:181px;width:60px;height:14px;background:#fff;"></div>
<span class="t" style="left:1203.20px;top:170px;font-size:10px;line-height:10px;font-weight:bold;transform-origin:0 0;transform:scaleX(1.0203);">Zschl.-Frist</span>
<div style="left:1203px;top:181px;width:60px;height:14px;background:#fff;"></div>
<span class="t" style="left:998.70px;top:202px;font-size:10px;line-height:10px;font-weight:bold;transform-origin:0 0;transform:scaleX(1.0420);">Status *</span>
<div style="left:999px;top:213px;width:128px;height:14px;background:#fff;"></div>
<span class="t" style="left:1000.40px;top:215px;font-size:11px;line-height:11px;transform-origin:0 0;transform:scaleX(1.0105);">Offen</span>
<span class="t" style="left:1135.10px;top:202px;font-size:10px;line-height:10px;font-weight:bold;transform-origin:0 0;transform:scaleX(1.0669);">Kalkulationsart *</span>
<div style="left:1135px;top:213px;width:128px;height:14px;background:#fff;"></div>
<span class="t" style="left:1136.30px;top:215px;font-size:11px;line-height:11px;transform-origin:0 0;transform:scaleX(0.9310);">EK+Zuschlag</span>
<span class="t" style="left:998.70px;top:234px;font-size:10px;line-height:10px;font-weight:bold;transform-origin:0 0;transform:scaleX(0.9941);">Lohn EK *</span>
<div style="left:999px;top:245px;width:60px;height:14px;background:#fff;"></div>
<span class="t" style="left:1000.90px;top:247px;font-size:11px;line-height:11px;transform-origin:0 0;transform:scaleX(0.9863);">40,67 €</span>
<span class="t" style="left:1066.90px;top:234px;font-size:10px;line-height:10px;font-weight:bold;transform-origin:0 0;transform:scaleX(1.0088);">Lohn VK *</span>
<div style="left:1067px;top:245px;width:60px;height:14px;background:#fff;"></div>
<span class="t" style="left:1068.90px;top:247px;font-size:11px;line-height:11px;transform-origin:0 0;transform:scaleX(0.9863);">43,92 €</span>
<span class="t" style="left:1135.10px;top:234px;font-size:10px;line-height:10px;font-weight:bold;transform-origin:0 0;transform:scaleX(1.0439);">MFaktor EK</span>
<div style="left:1135px;top:245px;width:60px;height:14px;background:#fff;"></div>
<span class="t" style="left:1137.20px;top:247px;font-size:11px;line-height:11px;transform-origin:0 0;transform:scaleX(0.9750);">1</span>
<span class="t" style="left:1203.20px;top:234px;font-size:10px;line-height:10px;font-weight:bold;transform-origin:0 0;transform:scaleX(1.0619);">MFaktor VK</span>
<div style="left:1203px;top:245px;width:60px;height:14px;background:#fff;"></div>
<span class="t" style="left:1205.20px;top:247px;font-size:11px;line-height:11px;transform-origin:0 0;transform:scaleX(0.9103);">1,26</span>
<span class="t" style="left:998.70px;top:266px;font-size:10px;line-height:10px;font-weight:bold;transform-origin:0 0;transform:scaleX(1.0576);">Adresse *</span>
<div style="left:999px;top:277px;width:76px;height:14px;background:#fff;"></div>
<span class="t" style="left:1000.30px;top:279px;font-size:11px;line-height:11px;color:#4b8a10;transform-origin:0 0;transform:scaleX(0.9195);">adler</span>
<span class="t" style="left:1082.40px;top:266px;font-size:10px;line-height:10px;font-weight:bold;transform-origin:0 0;transform:scaleX(0.9921);">Zeichen</span>
<div style="left:1083px;top:277px;width:44px;height:14px;background:#fff;"></div>
<span class="t" style="left:1084.60px;top:279px;font-size:11px;line-height:11px;transform-origin:0 0;transform:scaleX(0.8060);">MOS</span>
<span class="t" style="left:1135.10px;top:266px;font-size:10px;line-height:10px;font-weight:bold;transform-origin:0 0;transform:scaleX(1.0659);">Beleg-Nr.</span>
<div style="left:1135px;top:277px;width:60px;height:14px;background:#fff;"></div>
<span class="t" style="left:1136.30px;top:279px;font-size:11px;line-height:11px;transform-origin:0 0;transform:scaleX(0.9551);">AN1900018</span>
<span class="t" style="left:1203.20px;top:266px;font-size:10px;line-height:10px;font-weight:bold;transform-origin:0 0;transform:scaleX(1.0308);">Belegdatum</span>
<div style="left:1203px;top:277px;width:60px;height:14px;background:#fff;"></div>
<div style="left:222px;top:305px;width:1049px;height:432px;background:#e1e1e1;border:1px solid #aca899;"></div>
<div style="left:223px;top:306px;width:1047px;height:19px;background:#c0c0c0;"></div>
<div style="left:223px;top:325px;width:1047px;height:1px;background:#aca899;"></div>
<span class="t" style="left:229.60px;top:311px;font-size:11px;line-height:11px;font-weight:bold;color:#404040;transform-origin:0 0;transform:scaleX(1.0492);">Positionen</span>
<span class="t" style="left:230.00px;top:332px;font-size:10px;line-height:10px;transform-origin:0 0;transform:scaleX(0.9325);">Zuschläge &amp; Faktoren... (Umschalt+F8)</span>
<span class="t" style="left:1186.28px;top:332px;font-size:10px;line-height:10px;transform-origin:100% 0;transform:scaleX(0.9059);">Detailansichten »</span>
<div style="left:230px;top:345px;width:1033px;height:356px;background:#fff;border:1px solid #6e6e6e;"></div>
<div style="left:231px;top:346px;width:1031px;height:1px;background:#a8a8a8;"></div>
<div style="left:231px;top:346px;width:1px;height:354px;background:#a8a8a8;"></div>
<div style="left:232px;top:347px;width:1030px;height:15px;background:linear-gradient(#fafafa,#eeeeee);"></div>
<div style="left:249px;top:347px;width:20px;height:15px;background:linear-gradient(#dcea9e,#b8d752);"></div>
<div style="left:232px;top:363px;width:16px;height:247px;background:#f0f0f0;"></div>
<div style="left:232px;top:363px;width:16px;height:30px;background:#b7da4e;"></div>
<div style="left:232px;top:362px;width:1030px;height:1px;background:#a0a0a0;"></div>
<div style="left:232px;top:393px;width:16px;height:1px;background:#a0a0a0;"></div>
<div style="left:269px;top:393px;width:993px;height:1px;background:#a0a0a0;"></div>
<div style="left:232px;top:424px;width:16px;height:1px;background:#a0a0a0;"></div>
<div style="left:269px;top:424px;width:993px;height:1px;background:#a0a0a0;"></div>
<div style="left:232px;top:455px;width:16px;height:1px;background:#a0a0a0;"></div>
<div style="left:269px;top:455px;width:993px;height:1px;background:#a0a0a0;"></div>
<div style="left:232px;top:486px;width:16px;height:1px;background:#a0a0a0;"></div>
<div style="left:269px;top:486px;width:993px;height:1px;background:#a0a0a0;"></div>
<div style="left:232px;top:517px;width:16px;height:1px;background:#a0a0a0;"></div>
<div style="left:269px;top:517px;width:993px;height:1px;background:#a0a0a0;"></div>
<div style="left:232px;top:548px;width:16px;height:1px;background:#a0a0a0;"></div>
<div style="left:269px;top:548px;width:993px;height:1px;background:#a0a0a0;"></div>
<div style="left:232px;top:579px;width:16px;height:1px;background:#a0a0a0;"></div>
<div style="left:269px;top:579px;width:993px;height:1px;background:#a0a0a0;"></div>
<div style="left:232px;top:610px;width:1030px;height:1px;background:#a0a0a0;"></div>
<div style="left:248px;top:347px;width:1px;height:264px;background:#a0a0a0;"></div>
<div style="left:269px;top:347px;width:1px;height:264px;background:#a0a0a0;"></div>
<div style="left:345px;top:347px;width:1px;height:264px;background:#a0a0a0;"></div>
<div style="left:383px;top:347px;width:1px;height:264px;background:#a0a0a0;"></div>
<div style="left:459px;top:347px;width:1px;height:264px;background:#a0a0a0;"></div>
<div style="left:493px;top:347px;width:1px;height:264px;background:#a0a0a0;"></div>
<div style="left:528px;top:347px;width:1px;height:264px;background:#a0a0a0;"></div>
<div style="left:1118px;top:347px;width:1px;height:264px;background:#a0a0a0;"></div>
<div style="left:1182px;top:347px;width:1px;height:264px;background:#a0a0a0;"></div>
<div style="left:1261px;top:347px;width:1px;height:264px;background:#a0a0a0;"></div>
<svg style="left:237px;top:372px" width="7" height="12" viewBox="0 0 7 12"><path d="M0 0.200L6.500 6L0 11.800Z" fill="#000"/></svg>
<span class="t" style="left:279.70px;top:349px;font-size:11px;line-height:11px;font-weight:bold;transform-origin:50% 0;transform:scaleX(1.0582);">Kennung *</span>
<span class="t" style="left:356.81px;top:349px;font-size:11px;line-height:11px;font-weight:bold;">OZ</span>
<span class="t" style="left:395.22px;top:349px;font-size:11px;line-height:11px;font-weight:bold;transform-origin:50% 0;transform:scaleX(1.0930);">Nummer *</span>
<span class="t" style="left:465.20px;top:349px;font-size:11px;line-height:11px;font-weight:bold;transform-origin:50% 0;transform:scaleX(1.0727);">Mge</span>
<span class="t" style="left:498.73px;top:349px;font-size:11px;line-height:11px;font-weight:bold;transform-origin:50% 0;transform:scaleX(0.9269);">Einh</span>
<span class="t" style="left:786.32px;top:349px;font-size:11px;line-height:11px;font-weight:bold;transform-origin:50% 0;transform:scaleX(1.0265);">Beschreibung</span>
<span class="t" style="left:1142.86px;top:349px;font-size:11px;line-height:11px;font-weight:bold;transform-origin:50% 0;transform:scaleX(0.8715);">EP</span>
<span class="t" style="left:1214.25px;top:349px;font-size:11px;line-height:11px;font-weight:bold;transform-origin:50% 0;transform:scaleX(0.9367);">GP</span>
<span class="t" style="left:271.30px;top:367px;font-size:11px;line-height:11px;color:#008000;">Hinweistext</span>
<span class="t" style="left:530.30px;top:367px;font-size:11px;line-height:11px;color:#008000;transform-origin:0 0;transform:scaleX(0.9680);">Raumanschluss ausgehend von zentraler Verteilerdose sowie Steckdosen, Schalter und Lampenanschlüsse erneuern</span>
<div style="left:250px;top:366px;width:11px;height:11px;background:linear-gradient(#ffffff,#a8f0a8);border:1px solid #989898;"></div>
<span class="t" style="left:271.30px;top:398px;font-size:11px;line-height:11px;color:#0000ff;">Set</span>
<span class="t" style="left:348.50px;top:398px;font-size:11px;line-height:11px;color:#0000ff;transform-origin:0 0;transform:scaleX(0.9670);">1</span>
<span class="t" style="left:385.20px;top:398px;font-size:11px;line-height:11px;color:#0000ff;">m-ab 001</span>
<span class="t" style="left:484.18px;top:398px;font-size:11px;line-height:11px;color:#0000ff;transform-origin:100% 0;transform:scaleX(0.9670);">6</span>
<span class="t" style="left:503.79px;top:398px;font-size:11px;line-height:11px;color:#0000ff;transform-origin:50% 0;transform:scaleX(0.9300);">m²</span>
<span class="t" style="left:530.30px;top:398px;font-size:11px;line-height:11px;color:#0000ff;transform-origin:0 0;transform:scaleX(0.9687);">mit Papier abdecken und dieses nach Gebrauch wieder entfernen</span>
<span class="t" style="left:1149.71px;top:398px;font-size:11px;line-height:11px;color:#0000ff;">2,18 €</span>
<span class="t" style="left:1222.70px;top:398px;font-size:11px;line-height:11px;color:#0000ff;">13,08 €</span>
<div style="left:250px;top:397px;width:11px;height:11px;background:#f6f6f6;border:1px solid #989898;"></div>
<div style="left:253px;top:402px;width:5px;height:1px;background:#b4b4b4;"></div>
<div style="left:255px;top:400px;width:1px;height:5px;background:#b4b4b4;"></div>
<span class="t" style="left:271.30px;top:429px;font-size:11px;line-height:11px;color:#0000ff;">Set</span>
<span class="t" style="left:348.50px;top:429px;font-size:11px;line-height:11px;color:#0000ff;transform-origin:0 0;transform:scaleX(0.9670);">1</span>
<span class="t" style="left:385.20px;top:429px;font-size:11px;line-height:11px;color:#0000ff;">e-ka 001</span>
<span class="t" style="left:478.05px;top:429px;font-size:11px;line-height:11px;color:#0000ff;transform-origin:100% 0;transform:scaleX(0.9670);">15</span>
<span class="t" style="left:499.81px;top:429px;font-size:11px;line-height:11px;color:#0000ff;transform-origin:50% 0;transform:scaleX(0.9300);">lfdm</span>
<span class="t" style="left:530.30px;top:429px;font-size:11px;line-height:11px;color:#0000ff;transform-origin:0 0;transform:scaleX(0.9674);">Mantelleitung NYM 3 x 1,5 in Leerrohr, Kabelkanal oder Bühne einziehen</span>
<span class="t" style="left:1149.71px;top:429px;font-size:11px;line-height:11px;color:#0000ff;">2,70 €</span>
<span class="t" style="left:1222.70px;top:429px;font-size:11px;line-height:11px;color:#0000ff;">40,50 €</span>
<div style="left:250px;top:428px;width:11px;height:11px;background:#f6f6f6;border:1px solid #989898;"></div>
<div style="left:253px;top:433px;width:5px;height:1px;background:#b4b4b4;"></div>
<div style="left:255px;top:431px;width:1px;height:5px;background:#b4b4b4;"></div>
<span class="t" style="left:271.30px;top:460px;font-size:11px;line-height:11px;color:#0000ff;">Set</span>
<span class="t" style="left:348.50px;top:460px;font-size:11px;line-height:11px;color:#0000ff;transform-origin:0 0;transform:scaleX(0.9670);">2</span>
<span class="t" style="left:385.20px;top:460px;font-size:11px;line-height:11px;color:#0000ff;">e-ka 007</span>
<span class="t" style="left:484.18px;top:460px;font-size:11px;line-height:11px;color:#0000ff;transform-origin:100% 0;transform:scaleX(0.9670);">6</span>
<span class="t" style="left:499.81px;top:460px;font-size:11px;line-height:11px;color:#0000ff;transform-origin:50% 0;transform:scaleX(0.9300);">lfdm</span>
<span class="t" style="left:530.30px;top:460px;font-size:11px;line-height:11px;color:#0000ff;transform-origin:0 0;transform:scaleX(0.9674);">Mantelleitung NYM 3 x 2,5 in Leerrohr, Kabelkanal oder Bühne einziehen</span>
<span class="t" style="left:1149.71px;top:460px;font-size:11px;line-height:11px;color:#0000ff;">2,97 €</span>
<span class="t" style="left:1222.70px;top:460px;font-size:11px;line-height:11px;color:#0000ff;">17,82 €</span>
<div style="left:250px;top:459px;width:11px;height:11px;background:#f6f6f6;border:1px solid #989898;"></div>
<div style="left:253px;top:464px;width:5px;height:1px;background:#b4b4b4;"></div>
<div style="left:255px;top:462px;width:1px;height:5px;background:#b4b4b4;"></div>
<span class="t" style="left:271.30px;top:491px;font-size:11px;line-height:11px;color:#0000ff;">Set</span>
<span class="t" style="left:348.50px;top:491px;font-size:11px;line-height:11px;color:#0000ff;transform-origin:0 0;transform:scaleX(0.9670);">3</span>
<span class="t" style="left:385.20px;top:491px;font-size:11px;line-height:11px;color:#0000ff;">e-st 001</span>
<span class="t" style="left:484.18px;top:491px;font-size:11px;line-height:11px;color:#0000ff;transform-origin:100% 0;transform:scaleX(0.9670);">4</span>
<span class="t" style="left:499.50px;top:491px;font-size:11px;line-height:11px;color:#0000ff;transform-origin:50% 0;transform:scaleX(0.9300);">Stck</span>
<span class="t" style="left:530.30px;top:491px;font-size:11px;line-height:11px;color:#0000ff;transform-origin:0 0;transform:scaleX(0.9869);">Aus/Wechselschalter u. P. Standard liefern und montieren</span>
<span class="t" style="left:1149.71px;top:491px;font-size:11px;line-height:11px;color:#0000ff;">7,10 €</span>
<span class="t" style="left:1222.70px;top:491px;font-size:11px;line-height:11px;color:#0000ff;">28,40 €</span>
<div style="left:250px;top:490px;width:11px;height:11px;background:#f6f6f6;border:1px solid #989898;"></div>
<div style="left:253px;top:495px;width:5px;height:1px;background:#b4b4b4;"></div>
<div style="left:255px;top:493px;width:1px;height:5px;background:#b4b4b4;"></div>
<span class="t" style="left:271.30px;top:522px;font-size:11px;line-height:11px;color:#0000ff;">Set</span>
<span class="t" style="left:348.50px;top:522px;font-size:11px;line-height:11px;color:#0000ff;transform-origin:0 0;transform:scaleX(0.9670);">4</span>
<span class="t" style="left:385.20px;top:522px;font-size:11px;line-height:11px;color:#0000ff;">e-st 011</span>
<span class="t" style="left:484.18px;top:522px;font-size:11px;line-height:11px;color:#0000ff;transform-origin:100% 0;transform:scaleX(0.9670);">4</span>
<span class="t" style="left:499.50px;top:522px;font-size:11px;line-height:11px;color:#0000ff;transform-origin:50% 0;transform:scaleX(0.9300);">Stck</span>
<span class="t" style="left:530.30px;top:522px;font-size:11px;line-height:11px;color:#0000ff;transform-origin:0 0;transform:scaleX(0.9755);">Schalterabdeckung Standard liefern und montieren</span>
<span class="t" style="left:1149.71px;top:522px;font-size:11px;line-height:11px;color:#0000ff;">4,64 €</span>
<span class="t" style="left:1222.70px;top:522px;font-size:11px;line-height:11px;color:#0000ff;">18,56 €</span>
<div style="left:250px;top:521px;width:11px;height:11px;background:#f6f6f6;border:1px solid #989898;"></div>
<div style="left:253px;top:526px;width:5px;height:1px;background:#b4b4b4;"></div>
<div style="left:255px;top:524px;width:1px;height:5px;background:#b4b4b4;"></div>
<span class="t" style="left:271.30px;top:553px;font-size:11px;line-height:11px;color:#0000ff;">Set</span>
<span class="t" style="left:348.50px;top:553px;font-size:11px;line-height:11px;color:#0000ff;transform-origin:0 0;transform:scaleX(0.9670);">2</span>
<span class="t" style="left:385.20px;top:553px;font-size:11px;line-height:11px;color:#0000ff;">m-pvi 051</span>
<span class="t" style="left:484.18px;top:553px;font-size:11px;line-height:11px;color:#0000ff;transform-origin:100% 0;transform:scaleX(0.9670);">3</span>
<span class="t" style="left:503.79px;top:553px;font-size:11px;line-height:11px;color:#0000ff;transform-origin:50% 0;transform:scaleX(0.9300);">m²</span>
<span class="t" style="left:530.30px;top:553px;font-size:11px;line-height:11px;color:#0000ff;transform-origin:0 0;transform:scaleX(0.9532);">kleine Beschädigungen am Putz beispachteln</span>
<span class="t" style="left:1149.71px;top:553px;font-size:11px;line-height:11px;color:#0000ff;">0,81 €</span>
<span class="t" style="left:1228.81px;top:553px;font-size:11px;line-height:11px;color:#0000ff;">2,43 €</span>
<div style="left:250px;top:552px;width:11px;height:11px;background:#f6f6f6;border:1px solid #989898;"></div>
<div style="left:253px;top:557px;width:5px;height:1px;background:#b4b4b4;"></div>
<div style="left:255px;top:555px;width:1px;height:5px;background:#b4b4b4;"></div>
<div style="left:250px;top:583px;width:11px;height:11px;background:#f6f6f6;border:1px solid #989898;"></div>
<span class="t" style="left:253.46px;top:586px;font-size:11px;line-height:11px;color:#909090;">*</span>
<div style="left:273px;top:592px;width:1px;height:1px;background:#a890b0;"></div>
<div style="left:532px;top:592px;width:1px;height:1px;background:#a890b0;"></div>
<div style="left:276px;top:592px;width:1px;height:1px;background:#a890b0;"></div>
<div style="left:535px;top:592px;width:1px;height:1px;background:#a890b0;"></div>
<div style="left:279px;top:592px;width:1px;height:1px;background:#a890b0;"></div>
<div style="left:538px;top:592px;width:1px;height:1px;background:#a890b0;"></div>
<span class="t" style="left:1216.57px;top:584px;font-size:11px;line-height:11px;color:#808080;">120,79 €</span>
<div style="left:1118px;top:424px;width:144px;height:125px;border:1px solid #e02020;"></div>
<svg style="left:0;top:0;z-index:8" width="1280" height="770"><path d="M1119 346.500L1067 397.500M1118.500 610L1067 662" stroke="#1fa0e0" stroke-width="1" fill="none"/></svg>
<div style="left:917px;top:397px;width:151px;height:271px;background:#fff;z-index:9;box-shadow:5px 6px 5px rgba(0,0,0,0.5);"></div>
<svg style="left:917px;top:397px;z-index:9" width="151" height="271"><rect x="1.75" y="1.75" width="147.5" height="267.5" fill="none" stroke="#1a9ee6" stroke-width="3.5"/></svg>
<div style="left:921px;top:401px;width:143px;height:17px;background:linear-gradient(#fafafa,#eeeeee);z-index:10;"></div>
<div style="left:921px;top:401px;width:143px;height:1px;background:#a0a0a0;z-index:10;"></div>
<div style="left:921px;top:401px;width:1px;height:263px;background:#a0a0a0;z-index:10;"></div>
<div style="left:1063px;top:401px;width:1px;height:263px;background:#a0a0a0;z-index:10;"></div>
<div style="left:921px;top:417px;width:143px;height:1px;background:#a0a0a0;z-index:10;"></div>
<div style="left:921px;top:448px;width:143px;height:1px;background:#a0a0a0;z-index:10;"></div>
<div style="left:921px;top:479px;width:143px;height:1px;background:#a0a0a0;z-index:10;"></div>
<div style="left:921px;top:510px;width:143px;height:1px;background:#a0a0a0;z-index:10;"></div>
<div style="left:921px;top:541px;width:143px;height:1px;background:#a0a0a0;z-index:10;"></div>
<div style="left:921px;top:572px;width:143px;height:1px;background:#a0a0a0;z-index:10;"></div>
<div style="left:921px;top:603px;width:143px;height:1px;background:#a0a0a0;z-index:10;"></div>
<div style="left:921px;top:634px;width:143px;height:1px;background:#a0a0a0;z-index:10;"></div>
<div style="left:985px;top:401px;width:1px;height:263px;background:#a0a0a0;z-index:10;"></div>
<span class="t" style="left:946.26px;top:404px;font-size:11px;line-height:11px;font-weight:bold;transform-origin:50% 0;transform:scaleX(0.8715);z-index:10;">EP</span>
<span class="t" style="left:1016.35px;top:404px;font-size:11px;line-height:11px;font-weight:bold;transform-origin:50% 0;transform:scaleX(0.9305);z-index:10;">GP</span>
<span class="t" style="left:952.31px;top:453px;font-size:11px;line-height:11px;color:#0000ff;z-index:10;">2,18 €</span>
<span class="t" style="left:1025.20px;top:453px;font-size:11px;line-height:11px;color:#0000ff;z-index:10;">13,08 €</span>
<span class="t" style="left:952.31px;top:484px;font-size:11px;line-height:11px;color:#0000ff;z-index:10;">2,35 €</span>
<span class="t" style="left:1025.20px;top:484px;font-size:11px;line-height:11px;color:#0000ff;z-index:10;">35,25 €</span>
<span class="t" style="left:952.31px;top:515px;font-size:11px;line-height:11px;color:#0000ff;z-index:10;">2,86 €</span>
<span class="t" style="left:1025.20px;top:515px;font-size:11px;line-height:11px;color:#0000ff;z-index:10;">17,16 €</span>
<span class="t" style="left:952.31px;top:546px;font-size:11px;line-height:11px;color:#0000ff;z-index:10;">6,08 €</span>
<span class="t" style="left:1025.20px;top:546px;font-size:11px;line-height:11px;color:#0000ff;z-index:10;">24,32 €</span>
<span class="t" style="left:952.31px;top:577px;font-size:11px;line-height:11px;color:#0000ff;z-index:10;">1,56 €</span>
<span class="t" style="left:1031.31px;top:577px;font-size:11px;line-height:11px;color:#0000ff;z-index:10;">6,24 €</span>
<span class="t" style="left:952.31px;top:608px;font-size:11px;line-height:11px;color:#0000ff;z-index:10;">0,81 €</span>
<span class="t" style="left:1031.31px;top:608px;font-size:11px;line-height:11px;color:#0000ff;z-index:10;">2,43 €</span>
<span class="t" style="left:1025.20px;top:639px;font-size:11px;line-height:11px;color:#808080;z-index:10;">98,48 €</span>
<div style="left:922px;top:401px;width:142px;height:263px;overflow:hidden;z-index:11"><div style="left:-27px;top:121px;width:200px;height:26px;transform:rotate(-29deg);text-align:center;font:bold 22px 'Liberation Sans',sans-serif;line-height:26px;color:rgba(125,183,245,0.86);letter-spacing:0.75px;white-space:nowrap">Preise vorher:</div></div>
<span class="t" style="left:229.90px;top:706px;font-size:10px;line-height:10px;font-weight:bold;transform-origin:0 0;transform:scaleX(1.0650);">Zahlungsart *</span>
<div style="left:230px;top:717px;width:647px;height:16px;background:#f4f4f4;border:1px solid #000;"></div>
<span class="t" style="left:231.30px;top:720px;font-size:10px;line-height:10px;transform-origin:0 0;transform:scaleX(0.9332);">Zahlbar innerhalb von 14 Tagen ohne Abzug</span>
<div style="left:861px;top:718px;width:1px;height:14px;background:#000;"></div>
<svg style="left:867px;top:723px" width="6" height="6" viewBox="0 0 6 6"><path d="M0.500 0.500L5.500 5.500M5.500 0.500L0.500 5.500" stroke="#e84848" stroke-width="1"/></svg>
<span class="t" style="left:882.90px;top:706px;font-size:10px;line-height:10px;font-weight:bold;transform-origin:0 0;transform:scaleX(1.0650);">GP Summe</span>
<div style="left:883px;top:717px;width:69px;height:16px;background:#fff;border:1px solid #000;"></div>
<span class="t" style="left:885.20px;top:720px;font-size:10px;line-height:10px;transform-origin:0 0;transform:scaleX(0.9250);">120,79 €</span>
<span class="t" style="left:950.90px;top:706px;font-size:10px;line-height:10px;font-weight:bold;transform-origin:0 0;transform:scaleX(1.0650);">Rabattfähig</span>
<div style="left:951px;top:717px;width:69px;height:16px;background:#f4f4f4;border:1px solid #000;"></div>
<span class="t" style="left:953.20px;top:720px;font-size:10px;line-height:10px;transform-origin:0 0;transform:scaleX(0.9250);">120,79 €</span>
<span class="t" style="left:1018.90px;top:706px;font-size:10px;line-height:10px;font-weight:bold;transform-origin:0 0;transform:scaleX(1.0650);">± % *</span>
<div style="left:1019px;top:717px;width:41px;height:16px;background:#fff;border:1px solid #000;"></div>
<span class="t" style="left:1058.90px;top:706px;font-size:10px;line-height:10px;font-weight:bold;transform-origin:0 0;transform:scaleX(1.0650);">Netto</span>
<div style="left:1059px;top:717px;width:69px;height:16px;background:#f4f4f4;border:1px solid #000;"></div>
<span class="t" style="left:1061.20px;top:720px;font-size:10px;line-height:10px;transform-origin:0 0;transform:scaleX(0.9250);">120,79 €</span>
<span class="t" style="left:1126.90px;top:706px;font-size:10px;line-height:10px;font-weight:bold;transform-origin:0 0;transform:scaleX(1.0650);">USt.</span>
<div style="left:1127px;top:717px;width:69px;height:16px;background:#f4f4f4;border:1px solid #000;"></div>
<span class="t" style="left:1129.20px;top:720px;font-size:10px;line-height:10px;transform-origin:0 0;transform:scaleX(0.9250);">22,95 €</span>
<span class="t" style="left:1194.90px;top:706px;font-size:10px;line-height:10px;font-weight:bold;transform-origin:0 0;transform:scaleX(1.0650);">Brutto</span>
<div style="left:1195px;top:717px;width:68px;height:16px;background:#fff;border:1px solid #000;"></div>
<span class="t" style="left:1197.20px;top:720px;font-size:10px;line-height:10px;transform-origin:0 0;transform:scaleX(0.9250);">143,74 €</span>
<div style="left:0px;top:751px;width:677px;height:19px;border:1px solid #a0a0a0;border-right:1px solid #fff;border-bottom:1px solid #fff;"></div>
<div style="left:680px;top:751px;width:128px;height:19px;border:1px solid #a0a0a0;border-right:1px solid #fff;border-bottom:1px solid #fff;"></div>
<span class="t" style="left:688.00px;top:755px;font-size:12px;line-height:12px;transform-origin:0 0;transform:scaleX(1.0374);">Vorgang.Hinweistext</span>
<div style="left:811px;top:751px;width:156px;height:19px;border:1px solid #a0a0a0;border-right:1px solid #fff;border-bottom:1px solid #fff;"></div>
<span class="t" style="left:819.00px;top:755px;font-size:12px;line-height:12px;transform-origin:0 0;transform:scaleX(1.0673);">1. Angebot (AN1900018)</span>
<div style="left:970px;top:751px;width:41px;height:19px;border:1px solid #a0a0a0;border-right:1px solid #fff;border-bottom:1px solid #fff;"></div>
<span class="t" style="left:977.50px;top:755px;font-size:12px;line-height:12px;transform-origin:0 0;transform:scaleX(1.0117);">adler</span>
<div style="left:1014px;top:751px;width:37px;height:19px;border:1px solid #a0a0a0;border-right:1px solid #fff;border-bottom:1px solid #fff;"></div>
<span class="t" style="left:1024.00px;top:755px;font-size:12px;line-height:12px;transform-origin:0 0;transform:scaleX(1.0480);">#1</span>
<div style="left:1054px;top:751px;width:206px;height:19px;border:1px solid #a0a0a0;border-right:1px solid #fff;border-bottom:1px solid #fff;"></div>
<span class="t" style="left:1061.00px;top:755px;font-size:12px;line-height:12px;transform-origin:0 0;transform:scaleX(1.0155);">admin - Moser-Dokumentation.mdb</span>
</body></html>
